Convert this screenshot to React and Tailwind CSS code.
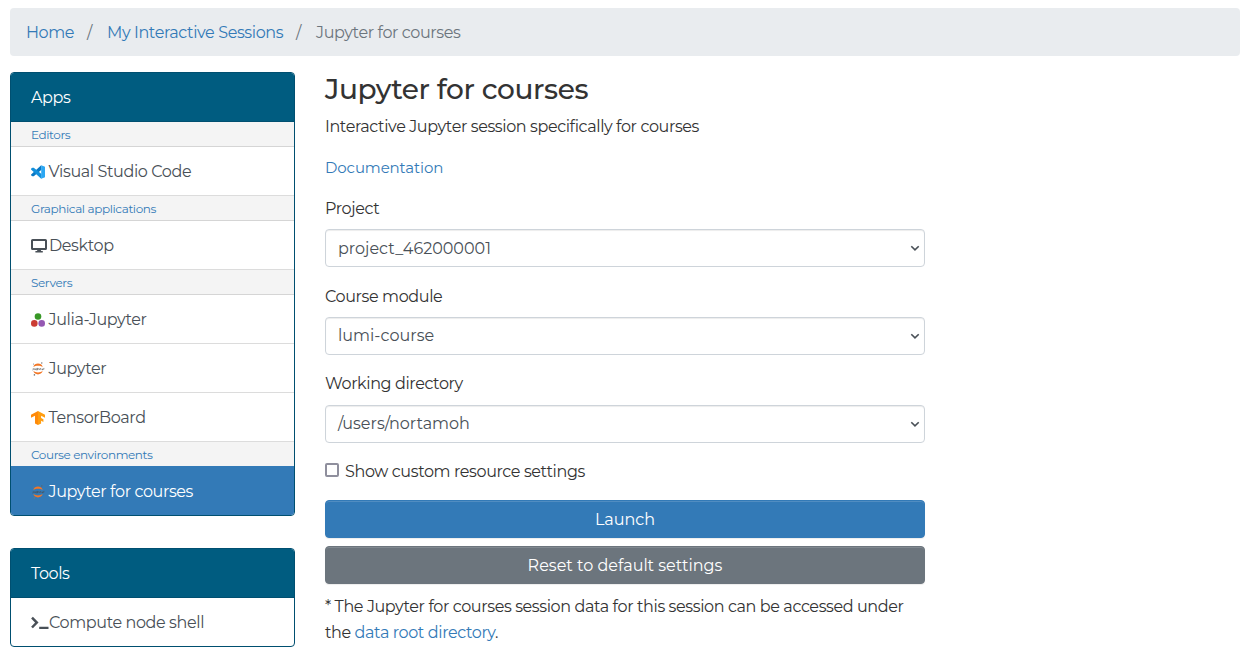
import React from "react";

function VSCodeIcon() {
  return (
    <svg viewBox="0 0 24 24" className="h-[14px] w-[14px]">
      <path d="M17.5.3 18 8.2 4.7 19.1l-2.4.3L0 17.5l.2-1.4Z" fill="#0a78c4" />
      <path d="M17.5 23.7 0 7.6.3 6l2.2-1.5 2.2.3L18 15.6v7Z" fill="#1390dc" />
      <path d="M17.5.3 24 3.2v17.6l-6.5 2.9Z" fill="#2ba7f3" />
    </svg>
  );
}

function DesktopIcon() {
  return (
    <svg viewBox="0 0 18 16" className="h-4 w-[18px] overflow-visible">
      <rect x="1" y="2" width="14" height="9" rx=".6" fill="none" stroke="#495057" strokeWidth="2" />
      <path d="M6.6 11.5h3l.6 1.5h1.6v1.6H4.4V13H6Z" fill="#495057" />
    </svg>
  );
}

function JuliaIcon() {
  return (
    <svg viewBox="0 0 14 14" className="h-[14px] w-[14px]">
      <circle cx="7" cy="3.5" r="3.3" fill="#389826" />
      <circle cx="3.3" cy="10.4" r="3.3" fill="#cb3c33" />
      <circle cx="10.7" cy="10.4" r="3.3" fill="#9558b2" />
    </svg>
  );
}

function JupyterIcon() {
  return (
    <svg viewBox="0 0 14 14" className="h-[14px] w-[14px]">
      <path d="M2.3 4.9C3.6.5 10.4.5 11.7 4.9 9.2 3.2 4.8 3.2 2.3 4.9Z" fill="#f37726" />
      <path d="M2.3 9.1C3.6 13.5 10.4 13.5 11.7 9.1 9.2 10.8 4.8 10.8 2.3 9.1Z" fill="#f37726" />
      <path
        d="M2.3 6.1v1.5q0 .6-.8.5M3.6 6.4v1.2h1.2V6.4M5.8 8.4V6.4h1.1v1.2H5.8M7.6 6.4l.7 1.3.7-1.3M9.7 6v1.6h.5M12.2 7.1h-1.1v.6h1M12.7 7.7V6.4h.6"
        fill="none"
        stroke="#4e4e4e"
        strokeWidth=".6"
      />
      <circle cx="10.8" cy="1" r=".65" fill="#616262" />
      <circle cx="3.4" cy="12.9" r=".8" fill="#767677" />
      <circle cx="2.5" cy="1.9" r=".5" fill="#767677" />
    </svg>
  );
}

function TensorIcon() {
  return (
    <svg viewBox="0 0 14 14" className="h-[14px] w-[14px]">
      <path d="M7 0v14l-3-1.6V4.7L0 6.8V3.7Z" fill="#ff8a0a" />
      <path d="M7 0 14 3.7v3.1l-3.9-2v2.3l2.3 1.2v2.6l-2.3-1.2v2.7L7 14Z" fill="#ff9d10" />
    </svg>
  );
}

function TerminalIcon() {
  return (
    <svg viewBox="0 0 18 16" className="h-4 w-[18px]">
      <path d="M1 2.7 5.8 7.5 1 12.5" fill="none" stroke="#495057" strokeWidth="2.5" />
      <path d="M8.2 11.8h9.3v2.2H8.2Z" fill="#495057" />
    </svg>
  );
}

function Card({ title, children }) {
  return (
    <section className="overflow-hidden rounded-[4px] border border-[#004f70] bg-white">
      <h2 className="flex h-[49px] items-center border-b border-[#004f70] bg-[#005c80] px-5 pt-0.5 text-white">{title}</h2>
      {children}
    </section>
  );
}

function Group({ children, last }) {
  return (
    <div
      className={`flex items-center border-[#d5d5d5] bg-[#f4f4f4] px-5 pt-px text-xs text-[#337ab7] ${
        last ? "h-6" : "h-[25px] border-b"
      }`}
    >
      {children}
    </div>
  );
}

function Item({ icon, children, active, last, glyph }) {
  return (
    <a
      className={`flex items-center border-[#dcdcdc] pl-5 ${
        active ? "h-[49px] bg-[#337ab7] text-white" : last ? "h-12 text-[#495057]" : "h-[49px] border-b text-[#495057]"
      }`}
    >
      <span className={`flex shrink-0 items-center pt-0.5 ${glyph ? "w-[18px]" : "w-[17.6px]"}`}>{icon}</span>
      <span className="pt-0.5">{children}</span>
    </a>
  );
}

function Field({ label, value, labelClass = "", valueClass = "" }) {
  return (
    <div className="mb-4 flex flex-col gap-2">
      <label className={`flex h-[26px] items-center ${labelClass}`}>{label}</label>
      <div className="flex h-[38px] items-center justify-between rounded-[4px] border border-[#ced4da] bg-white pr-1 pl-3 tracking-normal text-[#495057] shadow-[inset_0_1px_1px_rgba(0,0,0,0.075)]">
        <span className={valueClass}>{value}</span>
        <svg viewBox="0 0 10 8" className="h-2 w-[10px]">
          <path d="m1.3 2.3 3.7 3.6 3.7-3.6" fill="none" stroke="#495057" strokeWidth="1.6" />
        </svg>
      </div>
    </div>
  );
}

export default function App() {
  return (
    <div className="h-[665px] overflow-hidden bg-white pt-2 pr-[9px] pl-[10px] font-['Montserrat','Inter',sans-serif] text-base tracking-[-0.39px] whitespace-nowrap text-[#333]">
      <nav className="mb-4 flex h-12 items-center rounded-[4px] bg-[#e9ecef] pt-0.5 pl-4 text-[#6c757d]">
        <a className="w-[48px] text-[#337ab7]">Home</a>
        <span className="w-[33px] pl-[13px]">/</span>
        <a className="w-[176px] text-[#337ab7]">My Interactive Sessions</a>
        <span className="w-[33px] pl-[13px]">/</span>
        <span>Jupyter for courses</span>
      </nav>

      <div className="flex items-start gap-[30px]">
        <aside className="flex w-[285px] flex-col gap-8">
          <Card title="Apps">
            <Group>Editors</Group>
            <Item icon={<VSCodeIcon />}>Visual Studio Code</Item>
            <Group>Graphical applications</Group>
            <Item icon={<DesktopIcon />} glyph>Desktop</Item>
            <Group>Servers</Group>
            <Item icon={<JuliaIcon />}>Julia-Jupyter</Item>
            <Item icon={<JupyterIcon />}>Jupyter</Item>
            <Item icon={<TensorIcon />}>TensorBoard</Item>
            <Group last>Course environments</Group>
            <Item icon={<JupyterIcon />} active>Jupyter for courses</Item>
          </Card>
          <Card title="Tools">
            <Item icon={<TerminalIcon />} last glyph>Compute node shell</Item>
          </Card>
        </aside>

        <main className="flex w-[600px] flex-col">
          <h1 className="mb-2 h-[34px] text-[28px] leading-[34px] font-medium">Jupyter for courses</h1>
          <p className="mb-4 h-[25px] leading-[25px]">Interactive Jupyter session specifically for courses</p>
          <p className="mb-4 h-6 text-[15px] leading-[25px] tracking-[-0.12px] text-[#337ab7]">Documentation</p>

          <Field label="Project" value="project_462000001" labelClass="pt-0.5" valueClass="pt-0.5" />
          <Field label="Course module" value="lumi-course" labelClass="pt-0.5" />
          <Field label="Working directory" value="/users/nortamoh" />

          <label className="mb-[15px] flex h-[26px] items-center gap-[6px]">
            <span className="mb-[5px] h-[14px] w-[14px] rounded-[2px] border-2 border-[#8f8f9d] bg-white" />
            Show custom resource settings
          </label>

          <button className="mb-2 h-[38px] rounded-[4px] border border-[#337ab7] bg-[#337ab7] pt-0.5 tracking-normal text-white shadow-[inset_0_1px_0_rgba(255,255,255,0.15),0_1px_1px_rgba(0,0,0,0.075)]">
            Launch
          </button>
          <button className="mb-[10px] h-[38px] rounded-[4px] border border-[#6c757d] bg-[#6c757d] pt-0.5 tracking-normal text-white shadow-[inset_0_1px_0_rgba(255,255,255,0.15),0_1px_1px_rgba(0,0,0,0.075)]">
            Reset to default settings
          </button>

          <p className="leading-[26px]">
            * The Jupyter for courses session data for this session can be accessed under
            <br />
            the <a className="text-[#337ab7]">data root directory</a>.
          </p>
        </main>
      </div>
    </div>
  );
}
